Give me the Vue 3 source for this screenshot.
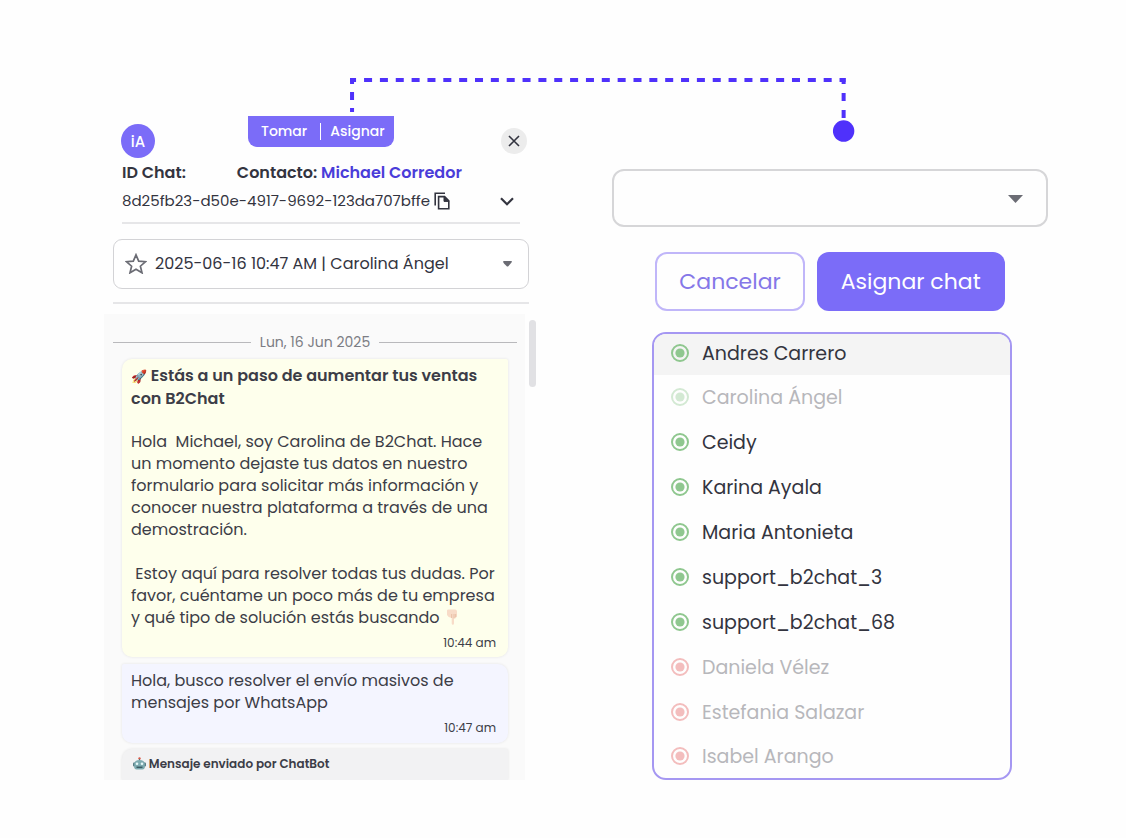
<script setup>
import { ref } from 'vue'

const session = ref('s1')
const agent = ref('')
const highlighted = ref('Andres Carrero')

const agents = [
  { name: 'Andres Carrero', status: 'online' },
  { name: 'Carolina Ángel', status: 'online', disabled: true },
  { name: 'Ceidy', status: 'online' },
  { name: 'Karina Ayala', status: 'online' },
  { name: 'Maria Antonieta', status: 'online' },
  { name: 'support_b2chat_3', status: 'online' },
  { name: 'support_b2chat_68', status: 'online' },
  { name: 'Daniela Vélez', status: 'offline', disabled: true },
  { name: 'Estefania Salazar', status: 'offline', disabled: true },
  { name: 'Isabel Arango', status: 'offline', disabled: true },
]

const greeting = [
  'Hola  Michael, soy Carolina de B2Chat. Hace',
  'un momento dejaste tus datos en nuestro',
  'formulario para solicitar más información y',
  'conocer nuestra plataforma a través de una',
  'demostración.',
  '',
  ' Estoy aquí para resolver todas tus dudas. Por',
  'favor, cuéntame un poco más de tu empresa',
  'y qué tipo de solución estás buscando ',
].join('\n')
</script>

<template>
  <main class="page">
    <svg class="connector" viewBox="0 0 506 66" fill="none" stroke="#4f31fb" stroke-width="4" aria-hidden="true">
      <path d="M1 4H496" stroke-dasharray="6 8 8 7.83 8 7.83 8 7.83 8 7.83 8 7.83 8 7.83 8 7.83 8 7.83 8 7.83 8 7.83 8 7.83 8 7.83 8 7.83 8 7.83 8 7.83 8 7.83 8 7.83 8 7.83 8 7.83 8 7.83 8 7.83 8 7.83 8 7.83 8 7.83 8 7.83 8 7.83 8 7.83 8 7.83 8 7.83 8 7.83 8 100" />
      <path d="M3 2V36" stroke-dasharray="6 8 8 8 4 20" />
      <path d="M494 2V42" stroke-dasharray="6 9 8 9 8 20" />
      <circle cx="494" cy="55" r="10.7" fill="#4f31fb" stroke="none" />
    </svg>

    <section class="chat">
      <header class="head">
        <div class="topbar">
          <span class="avatar">iA</span>
          <div class="tabs">
            <button type="button">Tomar</button>
            <button type="button">Asignar</button>
          </div>
          <button type="button" class="close" aria-label="Cerrar">
            <svg width="12" height="12" viewBox="0 0 12 12" stroke="#33343f" stroke-width="1.6"><path d="M1 1l10 10M11 1L1 11" /></svg>
          </button>
        </div>
        <div class="ids">
          <strong>ID Chat:</strong>
          <strong>Contacto: <a href="#contacto">Michael Corredor</a></strong>
        </div>
        <div class="idrow">
          <span>8d25fb23-d50e-4917-9692-123da707bffe</span>
          <button type="button" class="plain" aria-label="Copiar ID">
            <svg width="16" height="18" viewBox="0 0 16 18" fill="none" stroke="#33343f" stroke-width="1.6"><path d="M1.2 13.5V1.2H11M4.600 4.600h6l4.200 4.200v8H4.600z" /><path d="M10 4.600v4.800h4.800z" fill="#33343f" stroke-width="1" /></svg>
          </button>
          <button type="button" class="plain expand" aria-label="Ver detalles">
            <svg width="14" height="9" viewBox="0 0 14 9" fill="none" stroke="#33343f" stroke-width="2.2"><path d="M1 1.200l6 6 6-6" /></svg>
          </button>
        </div>
      </header>

      <div class="session">
        <svg class="star" width="22" height="21" viewBox="0 0 22 21" fill="none" stroke="#6b6c74" stroke-width="1.7"><path d="M11 1.800l2.700 6.300 6.900.6-5.200 4.500 1.600 6.600-6-3.600-6 3.600 1.600-6.600L1.400 8.700l6.900-.6z" /></svg>
        <select v-model="session" aria-label="Sesión">
          <option value="s1">2025-06-16 10:47 AM | Carolina Ángel</option>
        </select>
        <svg class="caret" width="9" height="6" viewBox="0 0 9 6" fill="#6b6c74"><path d="M0 .4Q0 0 1 0H8Q9 0 9 .6Q9 1.500 5.500 5Q4.500 6 3.500 5Q0 1.500 0 .4z" /></svg>
      </div>

      <div class="body">
        <div class="feed">
          <div class="day"><span>Lun, 16 Jun 2025</span></div>
          <article class="bubble out">
            <p class="lead"><span class="emoji">🚀</span> Estás a un paso de aumentar tus ventas<br />con B2Chat</p>
            <p>{{ greeting }}<svg class="glyph" width="16" height="16" viewBox="0 0 16 16" role="img" aria-label="Abajo"><path d="M3 1.500Q3 .5 4.500.5H11Q13 .5 13 2.500V7Q13 8.500 11.700 8.300V9Q11 10 10 9.300V14.500Q9.900 15.700 8.900 15.700Q7.800 15.700 7.700 14.500V9Q4 8.500 3 6z" fill="#f8dcc8" /><path d="M7.700 5v4M10 5v4.300M11.700 5v3.300" fill="none" stroke="#e3b79c" stroke-width=".8" /></svg></p>
            <time>10:44 am</time>
          </article>
          <article class="bubble in">
            <p>Hola, busco resolver el envío masivos de<br />mensajes por WhatsApp</p>
            <time>10:47 am</time>
          </article>
          <article class="bubble bot">
            <strong><svg class="glyph" width="13" height="13" viewBox="0 0 13 13" role="img" aria-label="Bot"><circle cx="6.500" cy="1.500" r="1.200" fill="#d85a4a" /><path d="M6.500 2v2" stroke="#577" /><rect x="0" y="5.500" width="13" height="4" rx="1" fill="#557b83" /><path d="M1.200 7Q1.500 3 6.500 3T11.800 7V10.500Q11.500 12.500 9.500 12.500H3.500Q1.500 12.500 1.200 10.500z" fill="#7dabb0" /><circle cx="4" cy="6.800" r="1.300" fill="#e5f8f8" /><circle cx="9" cy="6.800" r="1.300" fill="#e5f8f8" /><path d="M3.500 10.300h6" stroke="#395a63" stroke-width="1.500" /></svg> Mensaje enviado por ChatBot</strong>
          </article>
        </div>
        <div class="track"><div class="thumb"></div></div>
      </div>
    </section>

    <section class="assign">
      <div class="picker">
        <select v-model="agent" aria-label="Agente">
          <option value=""></option>
          <option v-for="a in agents" :key="a.name" :disabled="a.disabled">{{ a.name }}</option>
        </select>
        <svg class="caret" width="15" height="8" viewBox="0 0 15 8" fill="#6b6c74"><path d="M0 0H15L7.500 8z" /></svg>
      </div>
      <div class="actions">
        <button type="button" class="ghost">Cancelar</button>
        <button type="button" class="primary">Asignar chat</button>
      </div>
      <div class="options" role="listbox" aria-label="Agentes">
        <button
          v-for="a in agents"
          :key="a.name"
          type="button"
          role="option"
          :aria-selected="a.name === highlighted"
          :disabled="a.disabled"
          :class="['option', a.status, { active: a.name === highlighted }]"
          @click="highlighted = a.name"
        >
          <svg width="18" height="18" viewBox="0 0 18 18"><circle cx="9" cy="9" r="8" fill="none" stroke="currentColor" stroke-width="2" /><circle cx="9" cy="9" r="4.600" fill="currentColor" /></svg>
          <span>{{ a.name }}</span>
        </button>
      </div>
    </section>
  </main>
</template>

<style>
body {
  margin: 0;
  background: #fefefe;
}
</style>

<style scoped>
.page {
  --ink: #33343f;
  --violet: #7b6cf8;
  position: relative;
  box-sizing: border-box;
  display: grid;
  grid-template-columns: 433fr 436fr;
  gap: 75px;
  padding: 116px 78px 58px 104px;
  font-family: Poppins, Inter, "Noto Sans", sans-serif;
  font-size: 16px;
  color: var(--ink);
}
.page *, .page *::before, .page *::after { box-sizing: border-box; }
button, select {
  font: inherit;
  color: inherit;
  margin: 0;
  padding: 0;
  border: 0;
  background: none;
  cursor: pointer;
}
p { margin: 0; }
svg { display: block; flex: none; }
.connector {
  position: absolute;
  top: 76px;
  left: 31%;
  width: 45%;
}

.chat { display: flex; flex-direction: column; min-width: 0; }
.head {
  margin: 0 17px 0 18px;
  border-bottom: 2px solid #e6e6e8;
  padding-bottom: 9px;
}
.topbar {
  display: flex;
  align-items: flex-start;
  height: 44px;
  margin: 0 -7px 0 -1px;
}
.avatar {
  display: grid;
  place-items: center;
  width: 34px;
  height: 34px;
  margin: 8px 93px 0 0;
  border-radius: 50%;
  background: var(--violet);
  color: #fff;
  font-size: 15px;
  font-weight: 500;
}
.tabs {
  display: flex;
  align-items: center;
  height: 31px;
  border-radius: 0 0 9px 9px;
  background: var(--violet);
  color: #fff;
  font-size: 14px;
  font-weight: 500;
}
.tabs button { line-height: 17px; padding: 0 9px; }
.tabs button:first-child { padding: 0 13px; border-right: 1px solid #fff; }
.close {
  display: grid;
  place-items: center;
  width: 26px;
  height: 26px;
  margin: 12px 0 0 auto;
  border-radius: 50%;
  background: #ececec;
}
.ids {
  display: flex;
  gap: 51px;
  line-height: 26px;
}
.ids strong { font-weight: 600; }
.ids a { color: #4a3cd9; text-decoration: none; }
.idrow {
  display: flex;
  align-items: center;
  gap: 4px;
  margin-top: 4px;
  padding-bottom: 1px;
  font-size: 15px;
  line-height: 22px;
}
.expand { margin-left: auto; margin-right: 6px; }

.session {
  position: relative;
  margin: 15px 8px 0 9px;
  padding-bottom: 13px;
  border-bottom: 2px solid #e6e6e8;
}
.session select {
  appearance: none;
  display: block;
  width: 100%;
  height: 50px;
  padding: 0 36px 1px 41px;
  border: 1px solid #d3d3d6;
  border-radius: 9px;
  background: #fff;
}
.star { position: absolute; left: 12px; top: 14px; pointer-events: none; }
.session .caret { position: absolute; right: 17px; top: 22px; pointer-events: none; }

.body {
  flex: 1 1 0;
  min-height: 0;
  display: flex;
  margin-top: 10px;
}
.feed {
  flex: 1;
  overflow: hidden;
  padding: 17px 8px 0 9px;
  background: #fafafa;
}
.day {
  display: flex;
  align-items: center;
  gap: 9px;
  color: #7c7d84;
  font-size: 14px;
  line-height: 22px;
}
.day::before, .day::after { content: ""; flex: 1; border-top: 1px solid #b9b9bc; }
.bubble {
  display: flex;
  flex-direction: column;
  margin: 6px 9px 0;
  padding: 6px 12px 4px 9px;
  border-radius: 10px;
  color: #3c3d47;
  line-height: 22px;
  white-space: pre;
  box-shadow: 0 0 3px #00000018;
}
.out { border-top-right-radius: 2px; background: #feffec; }
.in { margin-top: 7px; padding-bottom: 5px; border-top-left-radius: 2px; background: #f4f5ff; }
.bot { padding: 4px 11px; background: #f2f2f3; border-radius: 10px 2px 0 0; font-size: 12px; height: 31px; }
.bubble strong, .lead { font-weight: 600; }
.lead { margin-bottom: 21px; }
.emoji { font-size: 13px; }
.glyph { display: inline-block; vertical-align: -2px; }
time { align-self: flex-end; font-size: 12px; line-height: 20px; margin-top: 4px; }
.track { width: 12px; padding: 6px 1px 0 4px; }
.thumb { height: 67px; border-radius: 4px; background: #e1e1e4; }

.assign {
  display: flex;
  flex-direction: column;
  align-items: center;
  padding-top: 53px;
}
.picker { position: relative; width: 100%; }
.picker select {
  appearance: none;
  display: block;
  width: 100%;
  height: 58px;
  padding: 0 48px 0 20px;
  border: 2px solid #d6d6d8;
  border-radius: 12px;
  font-size: 19px;
}
.picker .caret { position: absolute; right: 25px; top: 26px; pointer-events: none; }
.actions {
  display: flex;
  justify-content: center;
  gap: 12px;
  margin-top: 25px;
  font-size: 22px;
}
.actions button { height: 59px; border-radius: 12px; padding: 0 24px 1px; }
.actions .ghost { padding: 0 22px 1px; border: 2px solid #c0b6f9; color: #8577e8; }
.actions .primary { background: var(--violet); color: #fff; }
.options {
  align-self: stretch;
  margin: 21px 36px 0 40px;
  border: 2px solid #a597f2;
  border-radius: 14px;
  overflow: hidden;
  font-size: 19px;
}
.option {
  display: flex;
  align-items: center;
  gap: 13px;
  width: 100%;
  height: 45px;
  padding: 0 17px 1px;
  text-align: left;
}
.option.active { background: #f4f4f4; }
.option:first-child { height: 41px; padding-bottom: 3px; }
.option:last-child { height: 43px; }
.option svg { color: #8fc78f; }
.option.offline svg { color: #f3bdbd; }
.option:disabled { color: #b7b7bb; cursor: default; }
.option.online:disabled svg { color: #d3e9d3; }
</style>
